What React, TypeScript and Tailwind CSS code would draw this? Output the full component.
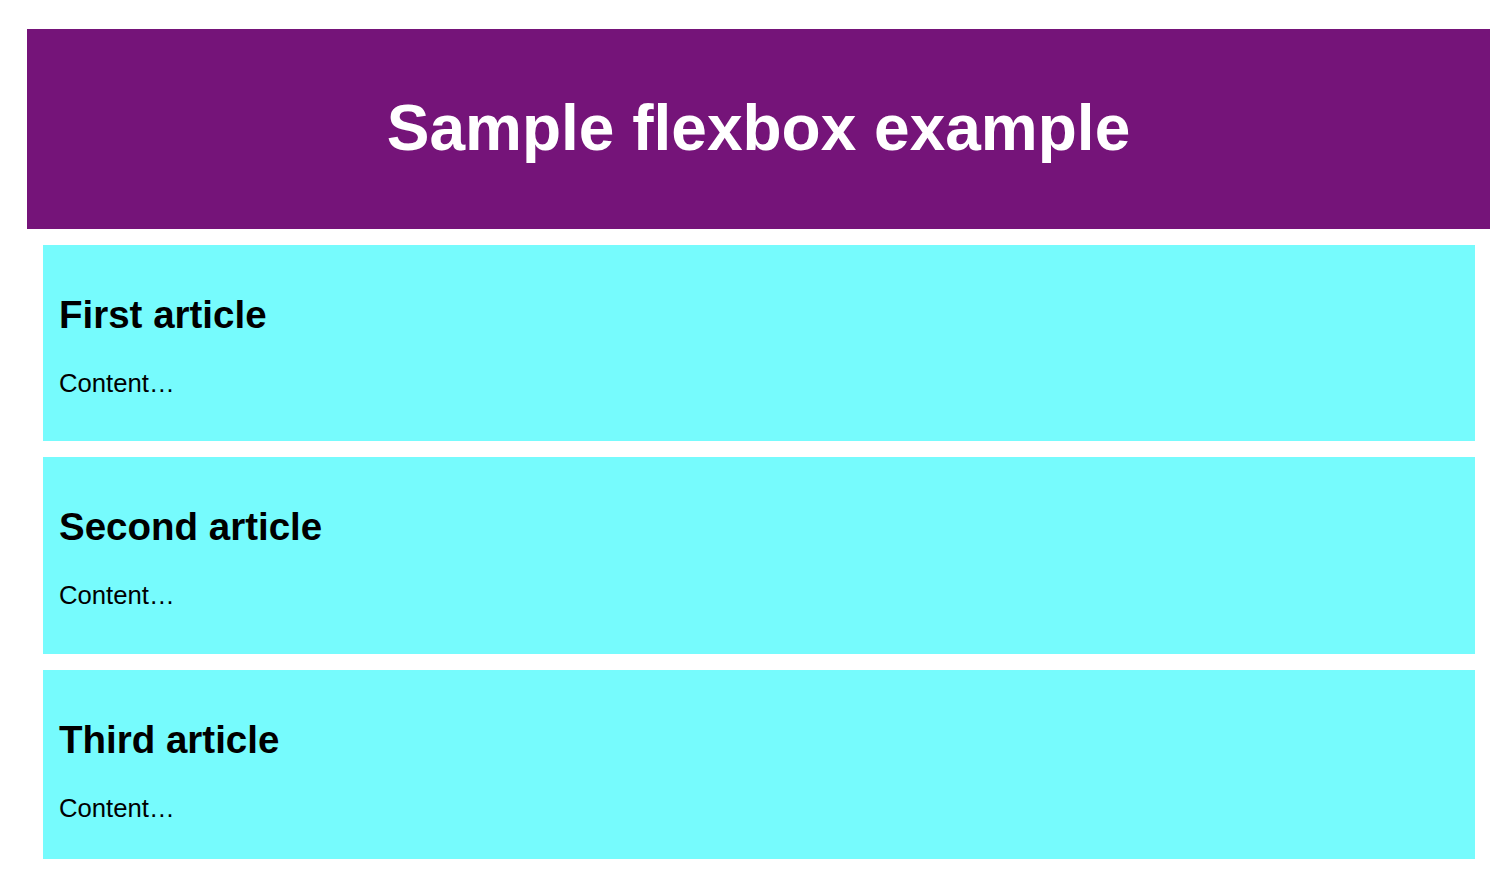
export default function App() {
  const articles = ['First article', 'Second article', 'Third article']
  const heights = ['h-[196px]', 'h-[197px]', 'h-[189px]']

  return (
    <div className="min-h-screen bg-white pt-[29px] pl-[27px] pr-[16px] font-['Liberation_Sans',Arial,sans-serif] text-black">
      {/* Header */}
      <header className="flex h-[200px] items-center justify-center bg-[#751479]">
        <h1 className="-mt-[3px] text-[64px] font-bold leading-normal text-white">
          Sample flexbox example
        </h1>
      </header>

      {/* Articles */}
      <section className="flex flex-col gap-4 pl-4 pr-[15px] pt-4">
        {articles.map((title, i) => (
          <article key={title} className={`${heights[i]} bg-[#76fbfd] px-4 pt-[48px]`}>
            <h2 className="text-[38.5px] font-bold leading-[44px]">{title}</h2>
            <p className="mt-[32px] text-[25.7px] leading-[29px]">Content…</p>
          </article>
        ))}
      </section>
    </div>
  )
}
